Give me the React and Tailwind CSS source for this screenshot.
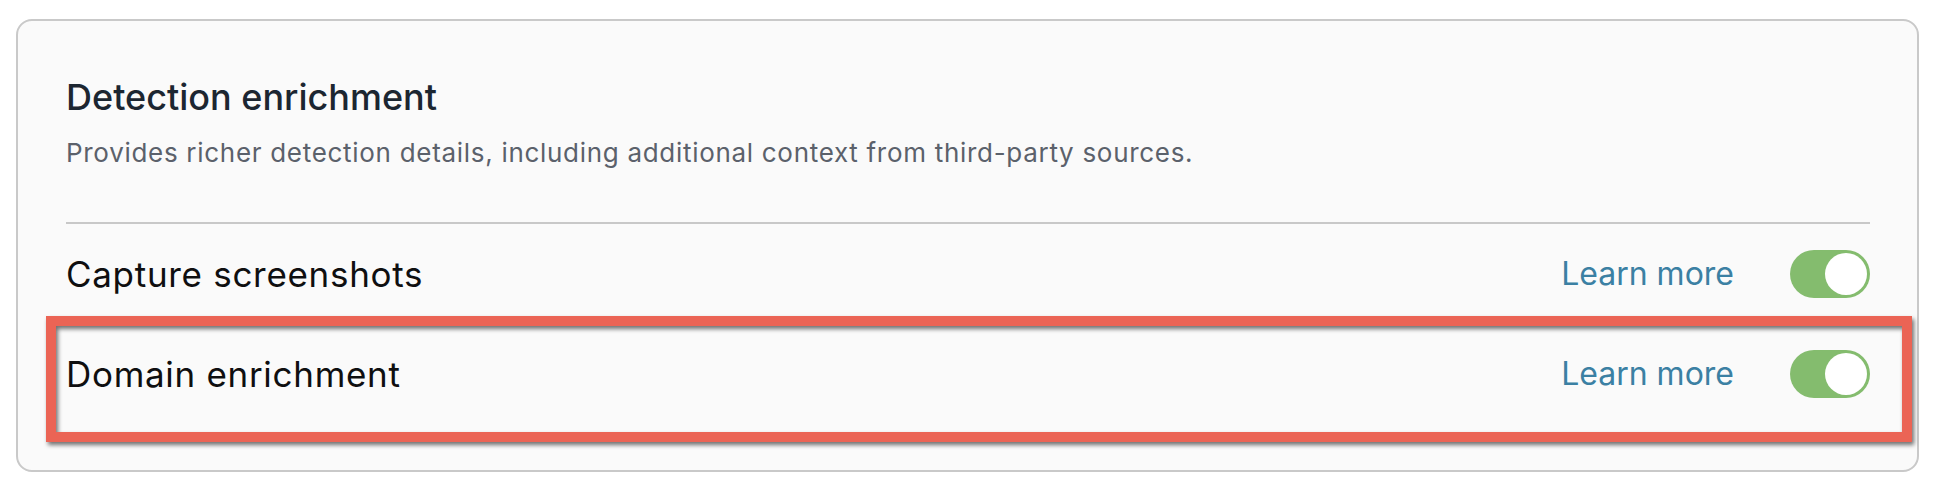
const rows = [
  { label: "Capture screenshots", enabled: true },
  { label: "Domain enrichment", enabled: true },
];

function Toggle({ on }) {
  return (
    <button
      type="button"
      aria-pressed={on}
      className="flex h-[48px] w-[80px] shrink-0 items-center justify-end rounded-full bg-[#84bc6e] p-[3px]"
    >
      <span className="block h-[42px] w-[42px] rounded-full bg-white" />
    </button>
  );
}

function SettingRow({ label, enabled }) {
  return (
    <div className="flex h-[100px] items-center justify-between">
      <span className="text-[35px] leading-[40px] tracking-[0.7px] font-normal text-[#0f0f10]">{label}</span>
      <div className="flex items-center gap-[56px]">
        <a href="#" className="text-[32px] leading-[40px] text-[#3b80a3]">
          Learn more
        </a>
        <Toggle on={enabled} />
      </div>
    </div>
  );
}

export default function App() {
  return (
    <div
      className="min-h-screen bg-white pt-[19px] pl-[16px] pr-[23px]"
      style={{ fontFamily: "Inter, 'Noto Sans', sans-serif" }}
    >
      <section className="relative rounded-[16px] border-2 border-[#c9c9c9] bg-[#fafafa] pt-[56px] pr-[47px] pb-[46px] pl-[48px]">
        <h2 className="text-[36px] leading-[40px] font-medium text-[#1c2631]">Detection enrichment</h2>
        <p className="mt-[20px] text-[26px] leading-[32px] tracking-[0.7px] text-[#5b616b]">
          Provides richer detection details, including additional context from third-party sources.
        </p>
        <div className="mt-[53px] h-[2px] bg-[#c8c8c8]" />
        {rows.map((row) => (
          <SettingRow key={row.label} label={row.label} enabled={row.enabled} />
        ))}

        {/* annotation box */}
        <div className="pointer-events-none absolute top-[295px] left-[28px] h-[126px] w-[1866px] border-[10px] border-[#eb6455] drop-shadow-[2px_3px_2px_rgba(0,0,0,0.55)]" />
      </section>
    </div>
  );
}
